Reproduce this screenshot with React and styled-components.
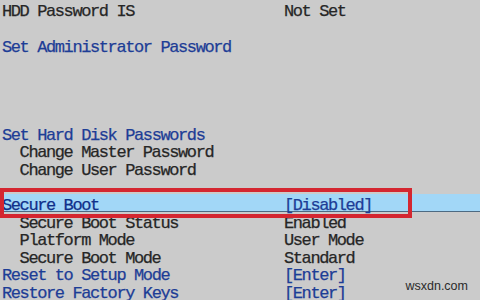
import React from "react";
import styled, { createGlobalStyle } from "styled-components";

const GlobalStyle = createGlobalStyle`
  html, body {
    margin: 0;
    padding: 0;
    background: #cbcbcb;
  }
`;

const Screen = styled.div`
  position: relative;
  width: 480px;
  height: 300px;
  overflow: hidden;
  background: #cbcbcb;
  padding-top: 3.4px;
  box-sizing: border-box;
  font-family: "Liberation Mono", "DejaVu Sans Mono", monospace;
  font-size: 17px;
  letter-spacing: -1.4px;
  line-height: 17.6px;
  color: #262626;
  -webkit-text-stroke: 0.25px currentColor;
`;

const Row = styled.div`
  position: relative;
  display: grid;
  grid-template-columns: 282px 1fr;
  height: 17.6px;
  padding-left: 2px;
  white-space: pre;
  z-index: ${(p) => (p.$selected ? 2 : 1)};

  ${(p) =>
    p.$selected &&
    `
    &::before {
      content: "";
      position: absolute;
      left: 0;
      right: 0;
      top: -3px;
      height: 17px;
      background: #a2d7f7;
      border-bottom: 1px solid #4d6a82;
      z-index: -1;
    }
  `}
`;

const Label = styled.span`
  padding-left: ${(p) => (p.$indent ? "17.6px" : "0")};
  color: ${(p) => (p.$selected ? "#10308a" : p.$link ? "#1d3d96" : "#262626")};
`;

const Value = styled.span`
  color: ${(p) => (p.$link ? "#1d3d96" : "#262626")};
`;

const SelectBox = styled.div`
  position: absolute;
  left: 0;
  top: -9px;
  width: 412px;
  height: 30px;
  box-sizing: border-box;
  border: 4px solid #d42630;
  z-index: 3;
`;

const Watermark = styled.div`
  position: absolute;
  right: 12px;
  bottom: 4px;
  font-family: "Liberation Sans", Arial, sans-serif;
  font-size: 12.5px;
  letter-spacing: 0;
  -webkit-text-stroke: 0;
  color: #2a2a2a;
  z-index: 4;
`;

const rows = [
  { label: "HDD Password IS", value: "Not Set" },
  null,
  { label: "Set Administrator Password", link: true },
  null,
  null,
  null,
  null,
  { label: "Set Hard Disk Passwords", link: true },
  { label: "Change Master Password", indent: true },
  { label: "Change User Password", indent: true },
  null,
  { label: "Secure Boot", value: "[Disabled]", link: true, valueLink: true, selected: true },
  { label: "Secure Boot Status", value: "Enabled", indent: true },
  { label: "Platform Mode", value: "User Mode", indent: true },
  { label: "Secure Boot Mode", value: "Standard", indent: true },
  { label: "Reset to Setup Mode", value: "[Enter]", link: true, valueLink: true },
  { label: "Restore Factory Keys", value: "[Enter]", link: true, valueLink: true },
];

export default function App() {
  return (
    <>
      <GlobalStyle />
      <Screen>
        {rows.map((r, i) =>
          r ? (
            <Row key={i} $selected={r.selected}>
              <Label $indent={r.indent} $link={r.link} $selected={r.selected}>
                {r.label}
              </Label>
              <Value $link={r.valueLink}>{r.value || ""}</Value>
              {r.selected && <SelectBox />}
            </Row>
          ) : (
            <Row key={i} />
          )
        )}
        <Watermark>wsxdn.com</Watermark>
      </Screen>
    </>
  );
}
